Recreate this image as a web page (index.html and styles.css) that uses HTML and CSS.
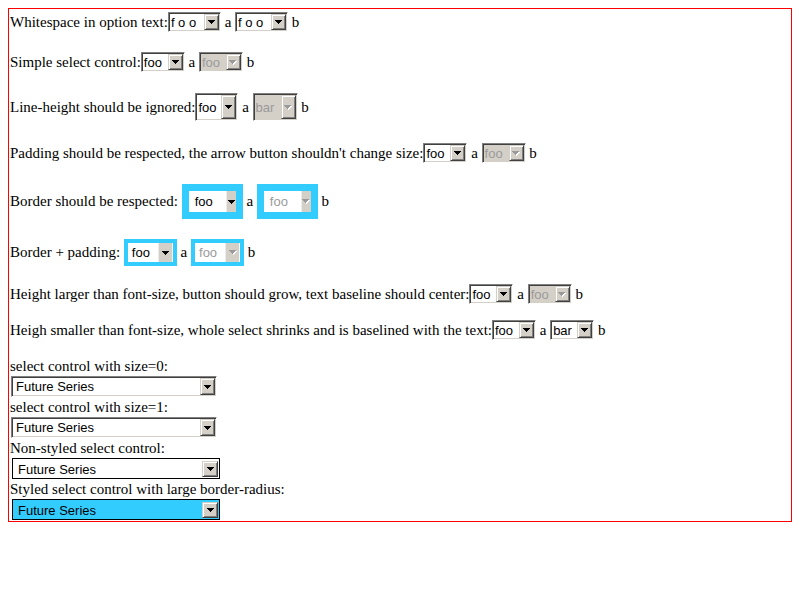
FILE: index.html
```html
<!DOCTYPE html>
<html>
<head>
<meta charset="utf-8">
<title>Select control tests</title>
<link rel="stylesheet" href="styles.css">
</head>
<body>
<div class="frame">
  <div class="row r1">
    <span>Whitespace in option text:</span>
    <span class="sel w53"><span class="val">f o o</span><span class="btn"><svg class="arr" width="7" height="4" viewBox="0 0 7 4"><path d="M0 0h7v1H0zM1 1h5v1H1zM2 2h3v1H2zM3 3h1v1H3z"/></svg></span></span><span> a </span><span class="sel w53"><span class="val">f o o</span><span class="btn"><svg class="arr" width="7" height="4" viewBox="0 0 7 4"><path d="M0 0h7v1H0zM1 1h5v1H1zM2 2h3v1H2zM3 3h1v1H3z"/></svg></span></span><span> b</span>
  </div>
  <div class="row r2">
    <span>Simple select control:</span><span class="sel w44"><span class="val">foo</span><span class="btn"><svg class="arr" width="7" height="4" viewBox="0 0 7 4"><path d="M0 0h7v1H0zM1 1h5v1H1zM2 2h3v1H2zM3 3h1v1H3z"/></svg></span></span><span> a </span><span class="sel w44 off"><span class="val">foo</span><span class="btn"><svg class="arr" width="8" height="5" viewBox="0 0 8 5"><path class="hl" d="M1 1h7v1H1zM2 2h5v1H2zM3 3h3v1H3zM4 4h1v1H4z"/><path d="M0 0h7v1H0zM1 1h5v1H1zM2 2h3v1H2zM3 3h1v1H3z"/></svg></span></span><span> b</span>
  </div>
  <div class="row r3">
    <span>Line-height should be ignored:</span><span class="sel w43 tall"><span class="val">foo</span><span class="btn"><svg class="arr" width="7" height="4" viewBox="0 0 7 4"><path d="M0 0h7v1H0zM1 1h5v1H1zM2 2h3v1H2zM3 3h1v1H3z"/></svg></span></span><span> a </span><span class="sel w45 tall off"><span class="val">bar</span><span class="btn"><svg class="arr" width="8" height="5" viewBox="0 0 8 5"><path class="hl" d="M1 1h7v1H1zM2 2h5v1H2zM3 3h3v1H3zM4 4h1v1H4z"/><path d="M0 0h7v1H0zM1 1h5v1H1zM2 2h3v1H2zM3 3h1v1H3z"/></svg></span></span><span> b</span>
  </div>
  <div class="row r4">
    <span>Padding should be respected, the arrow button shouldn't change size:</span><span class="sel w44"><span class="val">foo</span><span class="btn"><svg class="arr" width="7" height="4" viewBox="0 0 7 4"><path d="M0 0h7v1H0zM1 1h5v1H1zM2 2h3v1H2zM3 3h1v1H3z"/></svg></span></span><span> a </span><span class="sel w44 off"><span class="val">foo</span><span class="btn"><svg class="arr" width="8" height="5" viewBox="0 0 8 5"><path class="hl" d="M1 1h7v1H1zM2 2h5v1H2zM3 3h3v1H3zM4 4h1v1H4z"/><path d="M0 0h7v1H0zM1 1h5v1H1zM2 2h3v1H2zM3 3h1v1H3z"/></svg></span></span><span> b</span>
  </div>
  <div class="row r5">
    <span>Border should be respected: </span><span class="sel thick"><span class="val">foo</span><span class="fbtn"><svg class="arr" width="7" height="4" viewBox="0 0 7 4"><path d="M0 0h7v1H0zM1 1h5v1H1zM2 2h3v1H2zM3 3h1v1H3z"/></svg></span></span><span> a </span><span class="sel thick dim"><span class="val">foo</span><span class="fbtn"><svg class="arr" width="8" height="5" viewBox="0 0 8 5"><path class="hl" d="M1 1h7v1H1zM2 2h5v1H2zM3 3h3v1H3zM4 4h1v1H4z"/><path d="M0 0h7v1H0zM1 1h5v1H1zM2 2h3v1H2zM3 3h1v1H3z"/></svg></span></span><span> b</span>
  </div>
  <div class="row r6">
    <span>Border + padding: </span><span class="sel medium"><span class="val">foo</span><span class="fbtn"><svg class="arr" width="7" height="4" viewBox="0 0 7 4"><path d="M0 0h7v1H0zM1 1h5v1H1zM2 2h3v1H2zM3 3h1v1H3z"/></svg></span></span><span> a </span><span class="sel medium dim"><span class="val">foo</span><span class="fbtn"><svg class="arr" width="8" height="5" viewBox="0 0 8 5"><path class="hl" d="M1 1h7v1H1zM2 2h5v1H2zM3 3h3v1H3zM4 4h1v1H4z"/><path d="M0 0h7v1H0zM1 1h5v1H1zM2 2h3v1H2zM3 3h1v1H3z"/></svg></span></span><span> b</span>
  </div>
  <div class="row r7">
    <span>Height larger than font-size, button should grow, text baseline should center:</span><span class="sel w44"><span class="val">foo</span><span class="btn"><svg class="arr" width="7" height="4" viewBox="0 0 7 4"><path d="M0 0h7v1H0zM1 1h5v1H1zM2 2h3v1H2zM3 3h1v1H3z"/></svg></span></span><span> a </span><span class="sel w44 off"><span class="val">foo</span><span class="btn"><svg class="arr" width="8" height="5" viewBox="0 0 8 5"><path class="hl" d="M1 1h7v1H1zM2 2h5v1H2zM3 3h3v1H3zM4 4h1v1H4z"/><path d="M0 0h7v1H0zM1 1h5v1H1zM2 2h3v1H2zM3 3h1v1H3z"/></svg></span></span><span> b</span>
  </div>
  <div class="row r8">
    <span>Heigh smaller than font-size, whole select shrinks and is baselined with the text:</span><span class="sel w44"><span class="val">foo</span><span class="btn"><svg class="arr" width="7" height="4" viewBox="0 0 7 4"><path d="M0 0h7v1H0zM1 1h5v1H1zM2 2h3v1H2zM3 3h1v1H3z"/></svg></span></span><span> a </span><span class="sel w44"><span class="val">bar</span><span class="btn"><svg class="arr" width="7" height="4" viewBox="0 0 7 4"><path d="M0 0h7v1H0zM1 1h5v1H1zM2 2h3v1H2zM3 3h1v1H3z"/></svg></span></span><span> b</span>
  </div>

  <div class="list">
    <div class="lbl first">select control with size=0:</div>
    <div class="sel wide"><span class="val">Future Series</span><span class="btn"><svg class="arr" width="7" height="4" viewBox="0 0 7 4"><path d="M0 0h7v1H0zM1 1h5v1H1zM2 2h3v1H2zM3 3h1v1H3z"/></svg></span></div>
    <div class="lbl">select control with size=1:</div>
    <div class="sel wide"><span class="val">Future Series</span><span class="btn"><svg class="arr" width="7" height="4" viewBox="0 0 7 4"><path d="M0 0h7v1H0zM1 1h5v1H1zM2 2h3v1H2zM3 3h1v1H3z"/></svg></span></div>
    <div class="lbl">Non-styled select control:</div>
    <div class="sel plain"><span class="val">Future Series</span><span class="btn"><svg class="arr" width="7" height="4" viewBox="0 0 7 4"><path d="M0 0h7v1H0zM1 1h5v1H1zM2 2h3v1H2zM3 3h1v1H3z"/></svg></span></div>
    <div class="lbl">Styled select control with large border-radius:</div>
    <div class="sel plain cyan"><span class="val">Future Series</span><span class="btn"><svg class="arr" width="7" height="4" viewBox="0 0 7 4"><path d="M0 0h7v1H0zM1 1h5v1H1zM2 2h3v1H2zM3 3h1v1H3z"/></svg></span></div>
  </div>
</div>
</body>
</html>
```

FILE: styles.css
```css
body {
  margin: 8px;
  font-family: "Liberation Serif", "Times New Roman", serif;
  font-size: 15px;
  color: #000;
  background: #fff;
}

.frame {
  border: 1px solid #ff0000;
  padding: 0 0 1px 1px;
}

.row {
  display: flex;
  align-items: center;
  white-space: pre;
  line-height: 17px;
}

.r1 { margin-top: 3px; height: 20px; }
.r2 { margin-top: 20px; height: 20px; }
.r3 { margin-top: 21px; height: 28px; }
.r4 { margin-top: 22px; height: 20px; }
.r5 { margin-top: 21px; height: 35px; }
.r6 { margin-top: 20px; height: 27px; }
.r7 { margin-top: 18px; height: 20px; }
.r8 { margin-top: 16px; height: 20px; }

/* fake select */
.sel {
  display: flex;
  align-items: stretch;
  box-sizing: border-box;
  height: 20px;
  padding: 1px;
  background: #fff;
  border: 1px solid;
  border-color: #808080 #fff #fff #808080;
  box-shadow: inset 1px 1px #404040, inset -1px -1px #d4d0c8;
  font-family: "Liberation Sans", Arial, sans-serif;
  font-size: 13px;
  line-height: 15px;
  color: #000;
}

.val {
  flex: 1;
  display: flex;
  align-items: center;
  padding-left: 1px;
  white-space: pre;
  overflow: hidden;
}

.btn {
  box-sizing: border-box;
  width: 15px;
  flex: none;
  display: flex;
  align-items: center;
  justify-content: center;
  background: #d4d0c8;
  border: 1px solid;
  border-color: #d4d0c8 #404040 #404040 #d4d0c8;
  box-shadow: inset 1px 1px #fff, inset -1px -1px #808080;
}

.arr { display: block; fill: #000; }
.arr .hl { fill: #fff; }

.w53 { width: 53px; }
.w44 { width: 44px; }
.w43 { width: 43px; }
.w45 { width: 45px; }
.tall { height: 28px; }

.off { background: #d4d0c8; color: #9a9a9a; }
.off .arr, .dim .arr { fill: #9a9a9a; }
.off .arr .hl, .dim .arr .hl { fill: #fff; }

/* thick light-blue border variants */
.thick, .medium {
  padding: 0;
  box-shadow: none;
  border-style: solid;
  border-color: #33ccff;
}
.thick { width: 61px; height: 35px; border-width: 7px; }
.medium { width: 53px; height: 27px; border-width: 4px; }
.thick .val { padding-left: 6px; }
.medium .val { padding-left: 4px; }
.dim { color: #9a9a9a; }

.fbtn {
  flex: none;
  box-sizing: border-box;
  display: flex;
  align-items: center;
  justify-content: center;
  background: #d4d0c8;
  border-left: 1px solid #ececec;
}
.thick .fbtn { width: 10px; }
.medium .fbtn { width: 14px; margin-right: 1px; }

/* stacked list */
.list { margin-top: 16px; }
.lbl { height: 20px; line-height: 20px; }

.wide {
  width: 206px;
  height: 21px;
  margin-left: 1px;
}
.wide .val { padding-left: 3px; }

.plain {
  width: 208px;
  height: 21px;
  margin-left: 2px;
  border: 1px solid #000;
  box-shadow: none;
  padding: 2px 1px 1px 1px;
}
.plain .val { padding-left: 4px; }
.plain .btn { width: 16px; }
.cyan { background: #33ccff; }
```
